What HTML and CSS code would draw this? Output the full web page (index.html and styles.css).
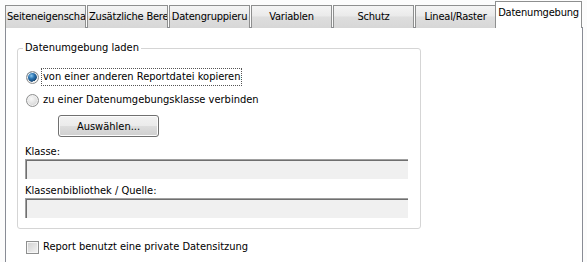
FILE: index.html
```html
<!DOCTYPE html>
<html lang="de">
<head>
<meta charset="UTF-8">
<title>Datenumgebung</title>
<link rel="stylesheet" href="styles.css">
</head>
<body>

<div class="tabs">
  <div class="tab">Seiteneigenscha</div>
  <div class="tab">Zusätzliche Bere</div>
  <div class="tab">Datengruppieru</div>
  <div class="tab">Variablen</div>
  <div class="tab">Schutz</div>
  <div class="tab">Lineal/Raster</div>
  <div class="tab active">Datenumgebung</div>
</div>

<div class="panel">
  <fieldset class="group">
    <legend>Datenumgebung laden</legend>
    <label class="option first">
      <input type="radio" name="env" checked>
      <span class="focus">von einer anderen Reportdatei kopieren</span>
    </label>
    <label class="option">
      <input type="radio" name="env">
      <span>zu einer Datenumgebungsklasse verbinden</span>
    </label>
    <button class="btn" type="button">Auswählen...</button>
    <div class="field-label">Klasse:</div>
    <div class="field"></div>
    <div class="field-label">Klassenbibliothek / Quelle:</div>
    <div class="field"></div>
  </fieldset>

  <label class="option check">
    <input type="checkbox">
    <span>Report benutzt eine private Datensitzung</span>
  </label>
</div>

</body>
</html>
```

FILE: styles.css
```css
/* Windows style property page */
body {
  margin: 0;
  padding: 0;
  background-color: #fcfcfc;
  font-family: "DejaVu Sans Condensed", "DejaVu Sans", sans-serif;
  font-size: 11px;
  color: #000;
  height: 262px;
  overflow: hidden;
}

.tabs {
  display: flex;
  align-items: flex-end;
  padding: 2px 0 0 5px;
  height: 26px;
  margin-bottom: -1px;
}
.tab {
  box-sizing: border-box;
  width: 81px;
  height: 23px;
  margin-right: 1px;
  border: 1px solid #8e8f8f;
  border-bottom: none;
  background: linear-gradient(#f4f4f4, #eaeaea 45%, #dedede 50%, #d7d7d7);
  text-align: center;
  line-height: 21px;
  white-space: nowrap;
  overflow: hidden;
  padding: 0 1px;
  letter-spacing: -0.2px;
}
.tab.active {
  position: relative;
  z-index: 1;
  width: 87px;
  height: 27px;
  margin-left: -2px;
  padding: 0;
  background: #fff;
  line-height: 21px;
}

.panel {
  box-sizing: border-box;
  margin-left: 5px;
  width: 578px;
  height: 240px;
  border: 1px solid #898c95;
  border-bottom: none;
  background: #fff;
  padding-top: 13px;
}

.group {
  width: 404px;
  box-sizing: border-box;
  margin: 0 0 0 11px;
  padding: 0 0 10px 0;
  border: 1px solid #d5d5d5;
  border-radius: 3px;
}
.group legend {
  margin-left: 5px;
  padding: 0 2px;
  line-height: 14px;
}

.option {
  display: flex;
  align-items: center;
  height: 18px;
  margin: 5px 0 0 8px;
}
.option.first {
  margin-top: 13px;
}
.option span {
  padding: 0 1px;
  margin-left: 1px;
  border: 1px dotted transparent;
  line-height: 16px;
}
.option span.focus {
  border-color: #555;
}

.option input[type="radio"] {
  appearance: none;
  box-sizing: border-box;
  width: 13px;
  height: 13px;
  margin: 0 1px 0 0;
  border: 1px solid #8e8f8f;
  border-radius: 50%;
  background: radial-gradient(circle at 40% 35%, #f8f8f8, #d4d4d4 80%);
  box-shadow: inset 0 0 0 1px #f2f2f2;
}
.option input[type="radio"]:checked {
  background: radial-gradient(circle at 40% 35%, #8cc6ec 0, #2a74b2 30%, #1a4a78 58%, #eeeeee 62%, #d6d6d6 90%);
}

.btn {
  display: block;
  box-sizing: border-box;
  width: 101px;
  height: 22px;
  margin: 6px 0 0 40px;
  border: 1px solid #707070;
  border-radius: 3px;
  background: linear-gradient(#f2f2f2, #ebebeb 48%, #dddddd 52%, #cfcfcf);
  box-shadow: inset 0 0 0 1px #fcfcfc;
  font: inherit;
  color: #000;
  padding: 0;
}

.field-label {
  margin: 0 0 0 7px;
  line-height: 14px;
  height: 14px;
}
.btn + .field-label {
  margin-top: 8px;
}
.field + .field-label {
  margin-top: 5px;
}
.field {
  box-sizing: border-box;
  width: 383px;
  height: 20px;
  margin-left: 7px;
  background: #f0f0f0;
  border-top: 1px solid #a0a0a0;
  border-left: 1px solid #a0a0a0;
  box-shadow: inset 1px 1px 0 #6f6f6f;
}

.option.check {
  margin: 9px 0 0 20px;
}
.option input[type="checkbox"] {
  appearance: none;
  box-sizing: border-box;
  width: 13px;
  height: 13px;
  margin: 0 1px 0 0;
  border: 1px solid #8e8f8f;
  background: linear-gradient(135deg, #d0d0d0, #f4f4f4);
  box-shadow: inset 0 0 0 1px #f6f6f6;
}
```
